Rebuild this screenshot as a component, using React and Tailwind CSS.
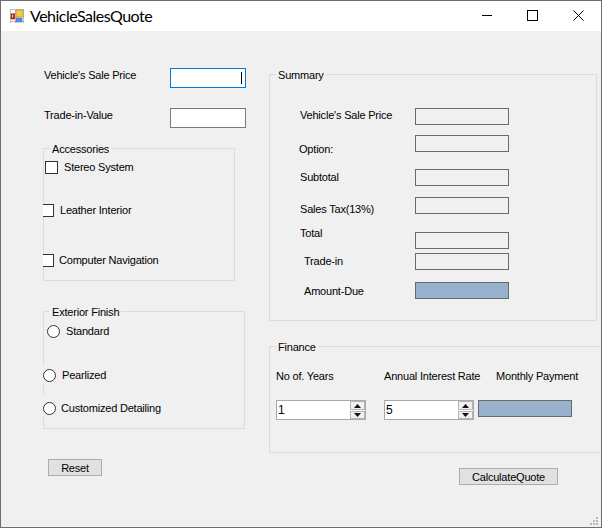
import React from 'react';

const FONT = "font-['Liberation_Sans',Arial,sans-serif]";

function TitleIcon() {
  return (
    <svg width="14" height="14" viewBox="0 0 14 14" className="shrink-0">
      <rect width="14" height="14" fill="#fff" />
      <path d="M0 0.5H14M0 4.5H5M0 12.5H14M0.5 0V14M5.5 0V5M5.5 11V14M13.5 0V14" stroke="#bdbdbd" fill="none" />
      <rect x="6" y="1" width="7" height="7" fill="#f6c84a" stroke="#b98a1c" strokeWidth="0.6" />
      <rect x="1" y="5" width="4" height="5" fill="#c8322a" stroke="#8a2a22" strokeWidth="0.6" />
      <rect x="2" y="6" width="1" height="2" fill="#f2d0c8" />
      <rect x="6" y="9" width="6" height="4" fill="#5b8fd8" stroke="#3d6cb0" strokeWidth="0.6" />
    </svg>
  );
}

function WindowButton({ className, children }) {
  return <div className={`w-[45px] h-full flex items-center justify-center ${className}`}>{children}</div>;
}

function TitleBar() {
  return (
    <div className="h-[30px] bg-white flex items-center shrink-0">
      <div className="ml-[9px] -mt-px"><TitleIcon /></div>
      <span className="ml-[6px] -mt-[1px] text-[16px] leading-[20px] tracking-[-0.5px] text-black font-['Lato',sans-serif]">VehicleSalesQuote</span>
      <div className="ml-auto flex h-full pb-px">
        <WindowButton className="pr-[3px]">
          <svg width="11" height="11" viewBox="0 0 11 11"><path d="M0 5.5H10" stroke="#000" /></svg>
        </WindowButton>
        <WindowButton className="pr-[2px]">
          <svg width="11" height="11" viewBox="0 0 11 11"><rect x="0.5" y="0.5" width="10" height="10" fill="none" stroke="#000" /></svg>
        </WindowButton>
        <WindowButton>
          <svg width="11" height="11" viewBox="0 0 11 11"><path d="M0.5 0.5L10.5 10.5M10.5 0.5L0.5 10.5" stroke="#000" /></svg>
        </WindowButton>
      </div>
    </div>
  );
}

function Group({ title, className, children }) {
  return (
    <div className={`relative border border-[#dcdcdc] ${className}`}>
      <span className="absolute left-[6px] -top-[6px] px-[2px] bg-[#f0f0f0] leading-[13px]">{title}</span>
      {children}
    </div>
  );
}

function Check({ label, className, clipped, gapClass }) {
  return (
    <div className={`flex items-center ${className}`}>
      <div className={clipped ? 'w-[11px] h-[13px] bg-white border border-l-0 border-[#333]' : 'w-[13px] h-[13px] bg-white border border-[#333]'} />
      <span className={`leading-[13px] ${gapClass}`}>{label}</span>
    </div>
  );
}

function Radio({ label, className, gapClass }) {
  return (
    <div className={`flex items-start bg-[#f0f0f0] ${className}`}>
      <div className="w-[13px] h-[13px] rounded-full bg-white border border-[#333]" />
      <span className={`leading-[13px] ${gapClass}`}>{label}</span>
    </div>
  );
}

function Output({ className, blue }) {
  return <div className={`w-[94px] h-[17px] border border-[#6a6a6a] ${blue ? 'bg-[#98b2ce]' : ''} ${className}`} />;
}

function Button({ children, className }) {
  return (
    <div className={`flex items-center justify-center h-[17px] pt-px bg-[#e1e1e1] border border-[#adadad] ${className}`}>
      {children}
    </div>
  );
}

function Spin({ value }) {
  return (
    <div className="w-[90px] h-[20px] bg-white border border-[#a9a9a9] flex">
      <span className="pl-[1px] leading-[18px] text-[12px] flex-1">{value}</span>
      <div className="w-[15px] flex flex-col gap-px">
        <div className="h-[9px] bg-[#f0f0f0] border border-[#b5b5b5] flex items-center justify-center">
          <svg width="7" height="4" viewBox="0 0 7 4"><path d="M3.5 0L7 4H0Z" fill="#111" /></svg>
        </div>
        <div className="h-[8px] bg-[#f0f0f0] border border-[#b5b5b5] flex items-center justify-center">
          <svg width="7" height="4" viewBox="0 0 7 4"><path d="M0 0H7L3.5 4Z" fill="#111" /></svg>
        </div>
      </div>
    </div>
  );
}

function ResizeGrip() {
  return (
    <svg width="9" height="9" viewBox="0 0 9 9" className="absolute right-[2px] bottom-[1px]">
      <path d="M6 0h2v2H6zM3 3h2v2H3zM6 3h2v2H6zM0 6h2v2H0zM3 6h2v2H3zM6 6h2v2H6z" fill="#b9b9b9" />
    </svg>
  );
}

export default function App() {
  return (
    <div className={`${FONT} relative w-[602px] h-[528px] overflow-hidden border border-[#6e6e6e] bg-[#f0f0f0] flex flex-col text-[11px] tracking-[-0.2px] text-black`}>
      <TitleBar />

      <div className="flex flex-1">
        {/* Left column */}
        <div className="w-[268px] pl-[42px] shrink-0">
          <div className="flex mt-[37px]">
            <span className="w-[126px] ml-px mt-px leading-[13px]">Vehicle's Sale Price</span>
            <div className="relative w-[76px] h-[20px] bg-white border border-[#0078d7]">
              <div className="absolute right-[3px] top-[3px] w-px h-[12px] bg-black" />
            </div>
          </div>
          <div className="flex mt-[20px]">
            <span className="w-[126px] ml-px mt-px leading-[13px]">Trade-in-Value</span>
            <div className="w-[76px] h-[20px] bg-white border border-[#7a7a7a]" />
          </div>

          <Group title="Accessories" className="w-[192px] h-[133px] mt-[20px]">
            <Check label="Stereo System" className="mt-[12px] ml-px" gapClass="ml-[6px]" />
            <Check label="Leather Interior" className="mt-[30px] -ml-px" gapClass="ml-[6px]" clipped />
            <Check label="Computer Navigation" className="mt-[37px] -ml-px" gapClass="ml-[5px]" clipped />
          </Group>

          <Group title="Exterior Finish" className="w-[202px] h-[118px] mt-[30px]">
            <Radio label="Standard" className="mt-[13px] ml-[3px] w-max" gapClass="ml-[6px]" />
            <Radio label="Pearlized" className="mt-[27px] -ml-px w-max pt-[4px] pb-[2px]" gapClass="ml-[6px]" />
            <Radio label="Customized Detailing" className="mt-[10px] -ml-px w-max pt-[8px] pb-[1px]" gapClass="ml-[5px]" />
          </Group>

          <Button className="w-[54px] mt-[30px] ml-[5px]">Reset</Button>
        </div>

        {/* Right column */}
        <div className="flex-1 pt-[43px]">
          <Group title="Summary" className="w-[328px] h-[247px]">
            <div className="flex">
              <div className="w-[145px] pl-[30px] flex flex-col leading-[13px]">
                <span className="mt-[34px]">Vehicle's Sale Price</span>
                <span className="mt-[21px] -ml-px">Option:</span>
                <span className="mt-[15px]">Subtotal</span>
                <span className="mt-[19px]">Sales Tax(13%)</span>
                <span className="mt-[11px]">Total</span>
                <span className="mt-[15px] ml-[4px]">Trade-in</span>
                <span className="mt-[17px] ml-[4px]">Amount-Due</span>
              </div>
              <div className="flex flex-col">
                <Output className="mt-[33px]" />
                <Output className="mt-[10px]" />
                <Output className="mt-[17px]" />
                <Output className="mt-[11px]" />
                <Output className="mt-[18px]" />
                <Output className="mt-[4px]" />
                <Output className="mt-[12px]" blue />
              </div>
            </div>
          </Group>

          <Group title="Finance" className="w-[340px] h-[107px] mt-[25px]">
            <div className="flex pl-[6px] pt-[23px]">
              <div className="w-[108px]">
                <div className="leading-[13px]">No of. Years</div>
                <div className="mt-[17px]"><Spin value="1" /></div>
              </div>
              <div className="w-[94px]">
                <div className="leading-[13px] whitespace-nowrap">Annual Interest Rate</div>
                <div className="mt-[17px]"><Spin value="5" /></div>
              </div>
              <div>
                <div className="leading-[13px] ml-[18px] whitespace-nowrap">Monthly Payment</div>
                <Output className="mt-[17px]" blue />
              </div>
            </div>
          </Group>

          <Button className="w-[99px] mt-[15px] ml-[190px]">CalculateQuote</Button>
        </div>
      </div>

      <ResizeGrip />
    </div>
  );
}
